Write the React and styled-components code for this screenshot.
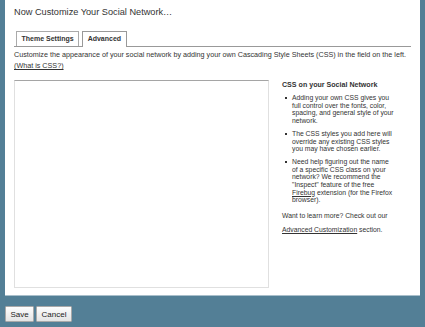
import React from "react";
import styled, { createGlobalStyle } from "styled-components";

const Global = createGlobalStyle`
  html, body { margin: 0; padding: 0; }
  body {
    background: #537f96;
    font-family: "Liberation Sans", Arial, sans-serif;
    color: #333;
    width: 425px;
    height: 327px;
    overflow: hidden;
  }
`;

const Panel = styled.div`
  margin: 0 5px;
  height: 296px;
  box-sizing: border-box;
  background: #fff;
  padding: 6px 9px 0 9px;
  border-bottom: 1px solid #a9bfcb;
`;

const Title = styled.h1`
  margin: 0;
  font-size: 9.2px;
  font-weight: normal;
  color: #333;
  line-height: 13px;
`;

const Tabs = styled.div`
  display: flex;
  align-items: flex-end;
  gap: 3px;
  margin-top: 12px;
  padding-left: 2px;
  border-bottom: 1px solid #999;
`;

const Tab = styled.div`
  font-size: 7px;
  font-weight: bold;
  color: #333;
  line-height: 14px;
  padding: 0 4.5px;
  border: 1px solid ${(p) => (p.$active ? "#999" : "#aaa")};
  border-bottom: none;
  background: #fff;
  margin-bottom: ${(p) => (p.$active ? "-1px" : "0")};
  height: ${(p) => (p.$active ? "15px" : "14px")};
`;

const Intro = styled.p`
  margin: 2px 0 0;
  font-size: 7.2px;
  line-height: 11px;
  color: #333;
`;

const Link = styled.a`
  color: #333;
  text-decoration: underline;
`;

const Content = styled.div`
  display: flex;
  gap: 13px;
  margin-top: 9px;
`;

const Editor = styled.textarea`
  width: 255px;
  height: 208px;
  box-sizing: border-box;
  border: 1px solid #e0e0e0;
  border-top: 1px solid #a5a5a5;
  resize: none;
  margin: 0;
  padding: 0;
  flex: none;
  background: #fff;
`;

const Side = styled.div`
  width: 113px;
  font-size: 6.8px;
  line-height: 7.7px;
  color: #333;
`;

const SideHead = styled.h3`
  margin: 0 0 4px;
  font-size: 7.1px;
  font-weight: bold;
  line-height: 10px;
`;

const List = styled.ul`
  margin: 0;
  padding: 0 0 0 10px;
  list-style: none;
`;

const Item = styled.li`
  position: relative;
  margin-bottom: 5px;
  &::before {
    content: "";
    position: absolute;
    left: -7px;
    top: 3px;
    width: 2px;
    height: 2px;
    background: #333;
  }
`;

const More = styled.p`
  margin: 5px 0 0;
  line-height: 14px;
`;

const Buttons = styled.div`
  display: flex;
  gap: 2px;
  padding: 10px 5px 0;
`;

const Button = styled.button`
  font-family: "Liberation Sans", Arial, sans-serif;
  font-size: 8px;
  color: #222;
  height: 16px;
  padding: 0;
  border: 1px solid #a8a8a8;
  border-radius: 1px;
  background: linear-gradient(#fdfdfd, #e4e4e4);
  width: ${(p) => p.$w}px;
  margin: 0;
`;

export default function App() {
  return (
    <>
      <Global />
      <Panel>
        <Title>Now Customize Your Social Network…</Title>
        <Tabs>
          <Tab>Theme Settings</Tab>
          <Tab $active>Advanced</Tab>
        </Tabs>
        <Intro>
          Customize the appearance of your social network by adding your own Cascading Style Sheets (CSS) in the field on the left.
          <br />
          <Link href="#">(What is CSS?)</Link>
        </Intro>
        <Content>
          <Editor />
          <Side>
            <SideHead>CSS on your Social Network</SideHead>
            <List>
              <Item>Adding your own CSS gives you full control over the fonts, color, spacing, and general style of your network.</Item>
              <Item>The CSS styles you add here will override any existing CSS styles you may have chosen earlier.</Item>
              <Item>
                Need help figuring out the name of a specific CSS class on your network? We recommend the "Inspect" feature of the free{" "}
                <Link href="#">Firebug</Link> extension (for the Firefox browser).
              </Item>
            </List>
            <More>
              Want to learn more? Check out our
              <br />
              <Link href="#">Advanced Customization</Link> section.
            </More>
          </Side>
        </Content>
      </Panel>
      <Buttons>
        <Button $w={29}>Save</Button>
        <Button $w={36}>Cancel</Button>
      </Buttons>
    </>
  );
}
